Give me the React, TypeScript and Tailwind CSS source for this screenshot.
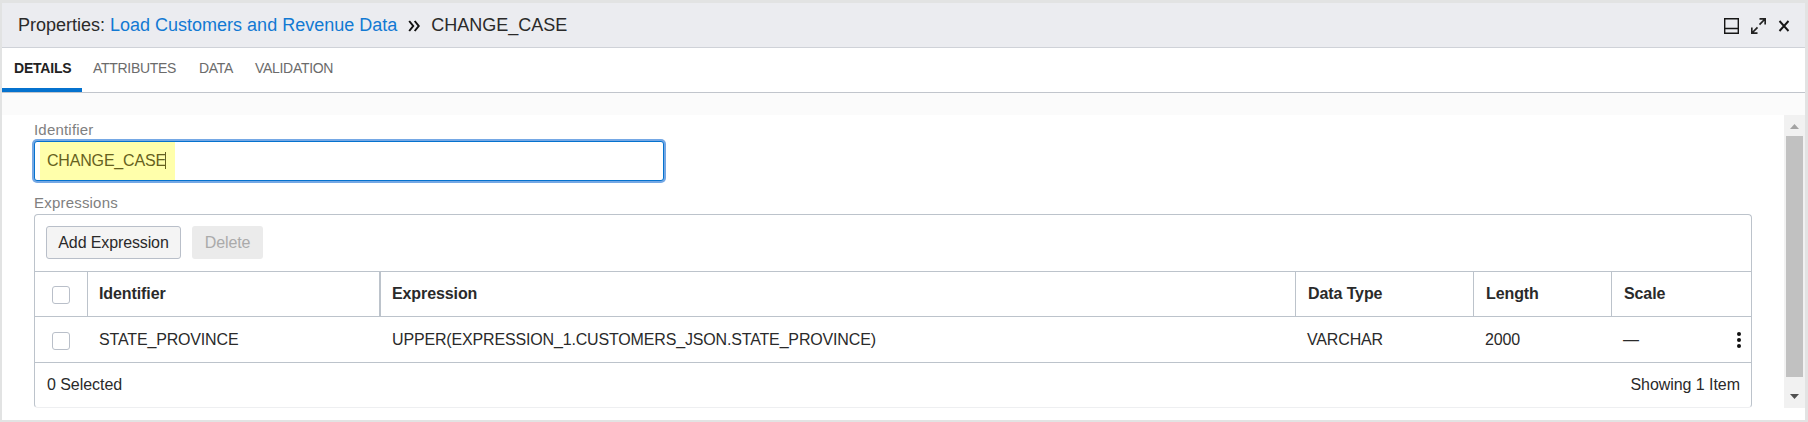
import type { ReactNode } from "react";

const HEADERS = ["Identifier", "Expression", "Data Type", "Length", "Scale"];
const ROW = ["STATE_PROVINCE", "UPPER(EXPRESSION_1.CUSTOMERS_JSON.STATE_PROVINCE)", "VARCHAR", "2000", "—"];

function Checkbox() {
  return <span className="mt-[2px] block size-[18px] rounded-[3px] border border-[#b9bfc9] bg-white" />;
}

function Row({ header, children }: { header?: boolean; children: ReactNode }) {
  return (
    <div
      className={
        header
          ? "grid h-[45px] shrink-0 grid-cols-[53px_293px_915px_178px_138px_1fr] border-b border-[#bcc3cb] font-bold"
          : "grid h-[46px] shrink-0 grid-cols-[53px_293px_915px_178px_138px_1fr] border-b border-[#bcc3cb] tracking-[-0.16px]"
      }
    >
      {children}
    </div>
  );
}

export default function App() {
  return (
    <div className="flex h-[422px] w-[1808px] flex-col border-t-[3px] border-r-[3px] border-b-2 border-l-2 border-[#e2e3e3] bg-white font-['Liberation_Sans',Arial,sans-serif] text-[16px] text-[#2a2a2a]">
      <header className="flex h-[45px] shrink-0 items-center justify-between border-b border-[#cfd2d8] bg-[#ebecf0] pr-[15px] pl-4">
        <div className="flex items-center text-[18px] leading-none whitespace-pre">
          <span>Properties: </span>
          <a className="text-[#1279d3]">Load Customers and Revenue Data</a>
          <svg className="mt-px mr-[11px] ml-[11px]" width="12" height="12" viewBox="0 0 12 12" fill="none" stroke="#111" strokeWidth="2">
            <path d="M1.200 1l4 5-4 5M6.700 1l4 5-4 5" />
          </svg>
          <span>CHANGE_CASE</span>
        </div>
        <div className="mt-px flex items-center gap-3">
          <svg width="15" height="16" viewBox="0 0 15 16" fill="none" stroke="#161616" strokeWidth="1.4">
            <path d="M.7 .7h13.600v14.600H.7zM.7 10.500h13.600" />
          </svg>
          <svg width="15" height="16" viewBox="0 0 15 16" fill="none" stroke="#222" strokeWidth="1.700">
            <path d="M8.500 .9h5.700v5.700M14 1L8.500 6.700M6.500 15.100H.8V9.400M1 15l5.500-5.700" />
          </svg>
          <svg width="12" height="12" viewBox="0 0 12 12" stroke="#161616" strokeWidth="1.900">
            <path d="M1.500 1l9 10M10.500 1l-9 10" />
          </svg>
        </div>
      </header>

      <nav className="flex h-[45px] shrink-0 border-b border-[#c1c5cc] text-[14px] leading-[40px] text-[#6b6b6b]">
        <span className="w-20 border-b-4 border-[#0572ce] pl-3 font-bold tracking-[-0.2px] text-[#222]">DETAILS</span>
        <span className="w-[106px] pl-[11px] tracking-[-0.3px]">ATTRIBUTES</span>
        <span className="w-14 pl-[11px] tracking-[-0.3px]">DATA</span>
        <span className="pl-[11px] tracking-[-0.3px]">VALIDATION</span>
      </nav>
      <div className="h-[22px] shrink-0 bg-[#fbfbfb]" />

      <div className="flex h-[293px] shrink-0">
        <main className="flex flex-1 flex-col pl-8">
          <label className="mt-1.5 h-[20px] text-[15px] leading-[18px] tracking-[0.2px] text-[#808080]">Identifier</label>
          <div className="flex h-[40px] w-[630px] items-center self-start rounded-[3px] border border-[#0572ce] bg-white shadow-[0_0_0_2px_#75a8e5]">
            <span className="ml-[5px] flex h-[38px] w-[135px] items-center bg-[#ffffab] pb-px pl-[7px] tracking-[-0.18px] text-[#66611e]">
              CHANGE_CASE
              <i className="-ml-px h-[17px] w-px bg-[#66611e]" />
            </span>
          </div>
          <label className="mt-[11px] h-[22px] text-[15px] leading-[22px] tracking-[0.2px] text-[#808080]">Expressions</label>
          <section className="flex h-[194px] w-[1718px] flex-col rounded-[4px] border border-[#bcc3cb] border-b-[#eeeff1]">
            <div className="flex h-[57px] shrink-0 items-center gap-[11px] border-b border-[#bcc3cb] pb-px pl-[11px] tracking-[-0.12px]">
              <button className="h-[33px] w-[135px] rounded-[3px] border border-[#b9bfc9] bg-[#f4f4f4] pt-px">Add Expression</button>
              <button className="h-[33px] w-[71px] rounded-[3px] bg-[#ebebeb] pt-px text-[#aaa]">Delete</button>
            </div>
            <Row header>
              <span className="flex items-center justify-center border-r border-[#bcc3cb]"><Checkbox /></span>
              {HEADERS.map((h, i) => (
                <span
                  key={h}
                  className={
                    i < 2
                      ? "border-r border-[#bcc3cb] pl-[11px] leading-[43px] tracking-[-0.1px] nth-2:border-r-2"
                      : "border-r border-[#bcc3cb] pl-[12px] leading-[43px] tracking-[-0.1px] last:border-r-0"
                  }
                >
                  {h}
                </span>
              ))}
            </Row>
            <Row>
              <span className="flex items-center justify-center border-r border-transparent"><Checkbox /></span>
              {ROW.map((c, i) => (
                <span key={c} className={i === 4 ? "flex items-center justify-between pr-2.5 pl-[11px]" : "pl-[11px] leading-[46px]"}>
                  {c}
                  {i === 4 && (
                    <svg width="4" height="16" viewBox="0 0 4 16" fill="#111">
                      <circle cx="2" cy="2" r="2" />
                      <circle cx="2" cy="8" r="2" />
                      <circle cx="2" cy="14" r="2" />
                    </svg>
                  )}
                </span>
              ))}
            </Row>
            <div className="flex justify-between pr-[11px] pl-[12px] leading-[44px] tracking-[-0.05px]">
              <span>0 Selected</span>
              <span>Showing 1 Item</span>
            </div>
          </section>
        </main>
        <aside className="flex w-[21px] shrink-0 flex-col items-center bg-[#f1f1f1]">
          <svg className="h-[21px] w-[9px] shrink-0" viewBox="0 0 9 21" fill="#a3a3a3"><path d="M0 14h9L4.500 9z" /></svg>
          <span className="h-[241px] w-[17px] bg-[#c1c1c1]" />
          <svg className="h-[30px] w-[9px] shrink-0" viewBox="0 0 9 30" fill="#505050"><path d="M0 17h9l-4.500 5z" /></svg>
        </aside>
      </div>
    </div>
  );
}
